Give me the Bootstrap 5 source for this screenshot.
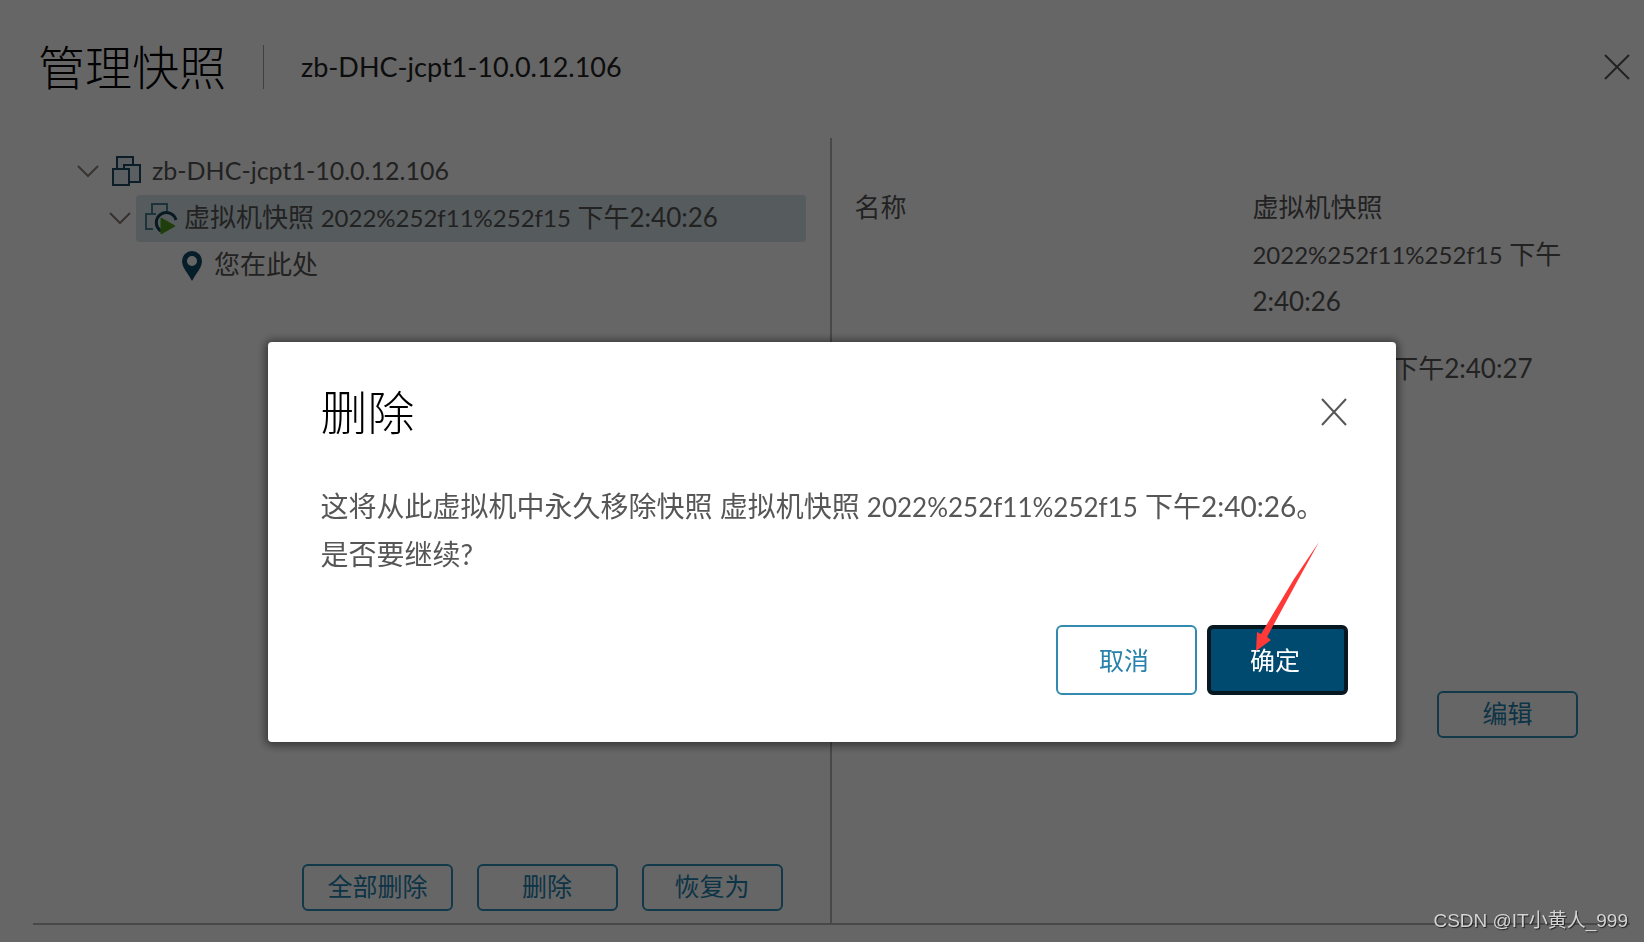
<!DOCTYPE html>
<html lang="zh-CN">
<head>
<meta charset="utf-8">
<meta name="viewport" content="width=device-width, initial-scale=1">
<title>管理快照</title>
<link href="https://cdn.jsdelivr.net/npm/bootstrap@5.3.0/dist/css/bootstrap.min.css" rel="stylesheet">
<script src="https://cdn.jsdelivr.net/npm/bootstrap@5.3.0/dist/js/bootstrap.bundle.min.js" defer></script>
<style>
  body { font-family: Lato, "Noto Sans CJK SC", sans-serif; font-size: 26px; line-height: 47px; color: #565656; }
  .heading { font-size: 47px; line-height: 56px; font-weight: 300; font-family: "Noto Sans CJK SC Light", "Noto Sans CJK SC", sans-serif; color: #000; padding-bottom: 4px; }
  .latin { font-size: 24px; }
  .page-head { padding: 37px 14px 41px 38px; }
  .vm-name { font-size: 27px; line-height: 47px; color: #222; padding-bottom: 2px; }
  .rule { width: 1px; height: 44px; margin: 0 37px; background: #a0a0a0; }
  .plain-btn { border: 0; background: none; padding: 0; line-height: 0; color: #565656; }
  .panes { margin: 0 14px 17px 33px; border-bottom: 2px solid #b4b4b4; }
  .tree-pane { border-right: 2px solid #b4b4b4; padding: 10px 24px 12px 42px; }
  .detail-pane { padding: 46px 52px 0 23px; }
  .tree-line { height: 47px; }
  .tree-line svg { flex: none; }
  .tree-line span { padding-bottom: 3px; }
  .tree-root { gap: 10px; }
  .tree-root .latin { font-size: 25px; }
  .tree-child { padding-left: 32px; gap: 3px; }
  .tree-leaf { padding-left: 106px; }
  .tree-label { gap: 11px; }
  .tree-child .tree-label { gap: 6px; }
  .picked { background: #d8e3e9; border-radius: 4px; padding-left: 8px; }
  .tool-btn { height: 47px; min-width: 141px; padding: 0 23px 3px; font-size: 25px; line-height: 40px; border: 2px solid #2b8fba; border-radius: 6px; color: #1f83ae; background: none; }
  .tree-tools { gap: 24px; padding-right: 23px; }
  .facts { display: grid; grid-template-columns: 55% 45%; row-gap: 20px; min-height: 507px; align-content: start; margin: 0; }
  .facts dt { font-weight: 400; }
  .facts dd { margin: 0; grid-column: 2; }
  .scrim { background: rgba(0, 0, 0, .6); padding-left: 19px; }
  .confirm { max-width: 1128px; margin: 342px auto 0; }
  .confirm .modal-content { border: 0; border-radius: 4px; padding: 40px 48px 47px 53px; box-shadow: 0 1px 8px 3px rgba(0, 0, 0, .45); color: #565656; }
  .confirm-text { margin: 41px 0 47px; font-size: 28px; }
  .confirm-text .latin { font-size: 26px; }
  .confirm-actions { gap: 10px; }
  .confirm-btn { width: 141px; height: 70px; padding: 0 4px 0 0; font-size: 25px; border-radius: 6px; }
  .confirm-btn.cancel { border: 2px solid #3489ae; color: #2682aa; background: #fff; }
  .confirm-btn.ok { border: 4px solid #071821; color: #fff; background: #004a70; }
  .pointer { position: absolute; right: 29px; bottom: 42px; pointer-events: none; }
  .watermark { position: absolute; right: 16px; bottom: 6px; z-index: 1060; font-family: "Liberation Sans", "Noto Sans CJK SC", sans-serif; font-size: 19px; line-height: 30px; color: #d4d4d4; text-shadow: 1px 1px 1px #222; }
</style>
</head>
<body>
<div class="d-flex flex-column min-vh-100">
  <header class="page-head d-flex align-items-center">
    <h1 class="heading mb-0">管理快照</h1>
    <div class="rule"></div>
    <span class="vm-name">zb-DHC-jcpt1-10.0.12.106</span>
    <button class="plain-btn ms-auto" type="button" aria-label="关闭">
      <svg width="26" height="28" viewBox="0 0 26 28" fill="none" stroke="currentColor" stroke-width="2"><path d="M1 2 25 26M25 2 1 26"/></svg>
    </button>
  </header>

  <main class="panes row g-0 flex-grow-1">
    <section class="tree-pane col-6 d-flex flex-column">
      <div class="tree-line tree-root d-flex align-items-center">
        <svg width="26" height="20" viewBox="0 0 26 20" fill="none" stroke="#8b827c" stroke-width="2"><path d="M3 4 13 14 23 4"/></svg>
        <div class="tree-label d-flex align-items-center">
          <svg width="30" height="32" viewBox="0 0 30 32" fill="#e3edf2" stroke="#1c4a60" stroke-width="2"><path d="M6 1H22V19H6z"/><path d="M13 9H29V26H13z"/><path d="M2 13H18V29H2z"/></svg>
          <span class="latin">zb-DHC-jcpt1-10.0.12.106</span>
        </div>
      </div>
      <div class="tree-line tree-child d-flex align-items-center">
        <svg width="26" height="20" viewBox="0 0 26 20" fill="none" stroke="#8b7b73" stroke-width="2"><path d="M3 4 13 14 23 4"/></svg>
        <div class="picked tree-label tree-line flex-grow-1 d-flex align-items-center text-nowrap">
          <svg width="34" height="34" viewBox="0 0 34 34" fill="none" stroke="#4a7f97" stroke-width="2"><path d="M8 12V2H23V9M12 12H2V27H9"/><path d="M17 29A10 10 0 1 1 32 18" stroke="#173f55" stroke-width="3"/><path d="M17 16V32L31 24z" fill="#4e9c20" stroke="#4e9c20" stroke-width="1"/></svg>
          <span>虚拟机快照 <span class="latin">2022%252f11%252f15</span> 下午2:40:26</span>
        </div>
      </div>
      <div class="tree-line tree-leaf d-flex align-items-center">
        <div class="tree-label d-flex align-items-center">
          <svg width="22" height="32" viewBox="0 0 22 32"><path fill="#0f4b68" fill-rule="evenodd" d="M11 1A10 10 0 0 1 21 11C21 18 15 23 11 31 7 23 1 18 1 11A10 10 0 0 1 11 1zM11 6a5 5 0 1 0 0 10 5 5 0 0 0 0-10z"/></svg>
          <span>您在此处</span>
        </div>
      </div>
      <div class="tree-tools d-flex justify-content-end mt-auto">
        <button class="tool-btn" type="button">全部删除</button>
        <button class="tool-btn" type="button">删除</button>
        <button class="tool-btn" type="button">恢复为</button>
      </div>
    </section>

    <section class="detail-pane col-6 d-flex flex-column">
      <dl class="facts">
        <dt>名称</dt>
        <dd>虚拟机快照 <span class="latin">2022%252f11%252f15</span> 下午2:40:26</dd>
        <dd class="text-nowrap"><span class="latin">2022/11/15</span> 下午2:40:27</dd>
      </dl>
      <button class="tool-btn align-self-end" type="button">编辑</button>
    </section>
  </main>
</div>

<div class="modal scrim d-block" role="dialog" aria-modal="true" aria-labelledby="confirm-title">
  <div class="modal-dialog confirm">
    <div class="modal-content">
      <div class="d-flex align-items-center justify-content-between">
        <h2 class="heading mb-0" id="confirm-title">删除</h2>
        <button class="plain-btn" type="button" aria-label="关闭">
          <svg width="28" height="28" viewBox="0 0 28 28" fill="none" stroke="currentColor" stroke-width="2"><path d="M2 1 26 27M26 1 2 27"/></svg>
        </button>
      </div>
      <p class="confirm-text">这将从此虚拟机中永久移除快照 虚拟机快照 <span class="latin">2022%252f11%252f15</span> 下午2:40:26。<br>是否要继续?</p>
      <div class="confirm-actions d-flex justify-content-end">
        <button class="confirm-btn cancel" type="button">取消</button>
        <button class="confirm-btn ok" type="button">确定</button>
      </div>
      <svg class="pointer" width="120" height="160" viewBox="0 0 120 160" fill="#ff3838"><path d="M72 2 47 39 14 94 10 92 9 111 24 100 20 97 51 40z"/></svg>
    </div>
  </div>
</div>

<div class="watermark">CSDN @IT小黄人_999</div>
</body>
</html>
